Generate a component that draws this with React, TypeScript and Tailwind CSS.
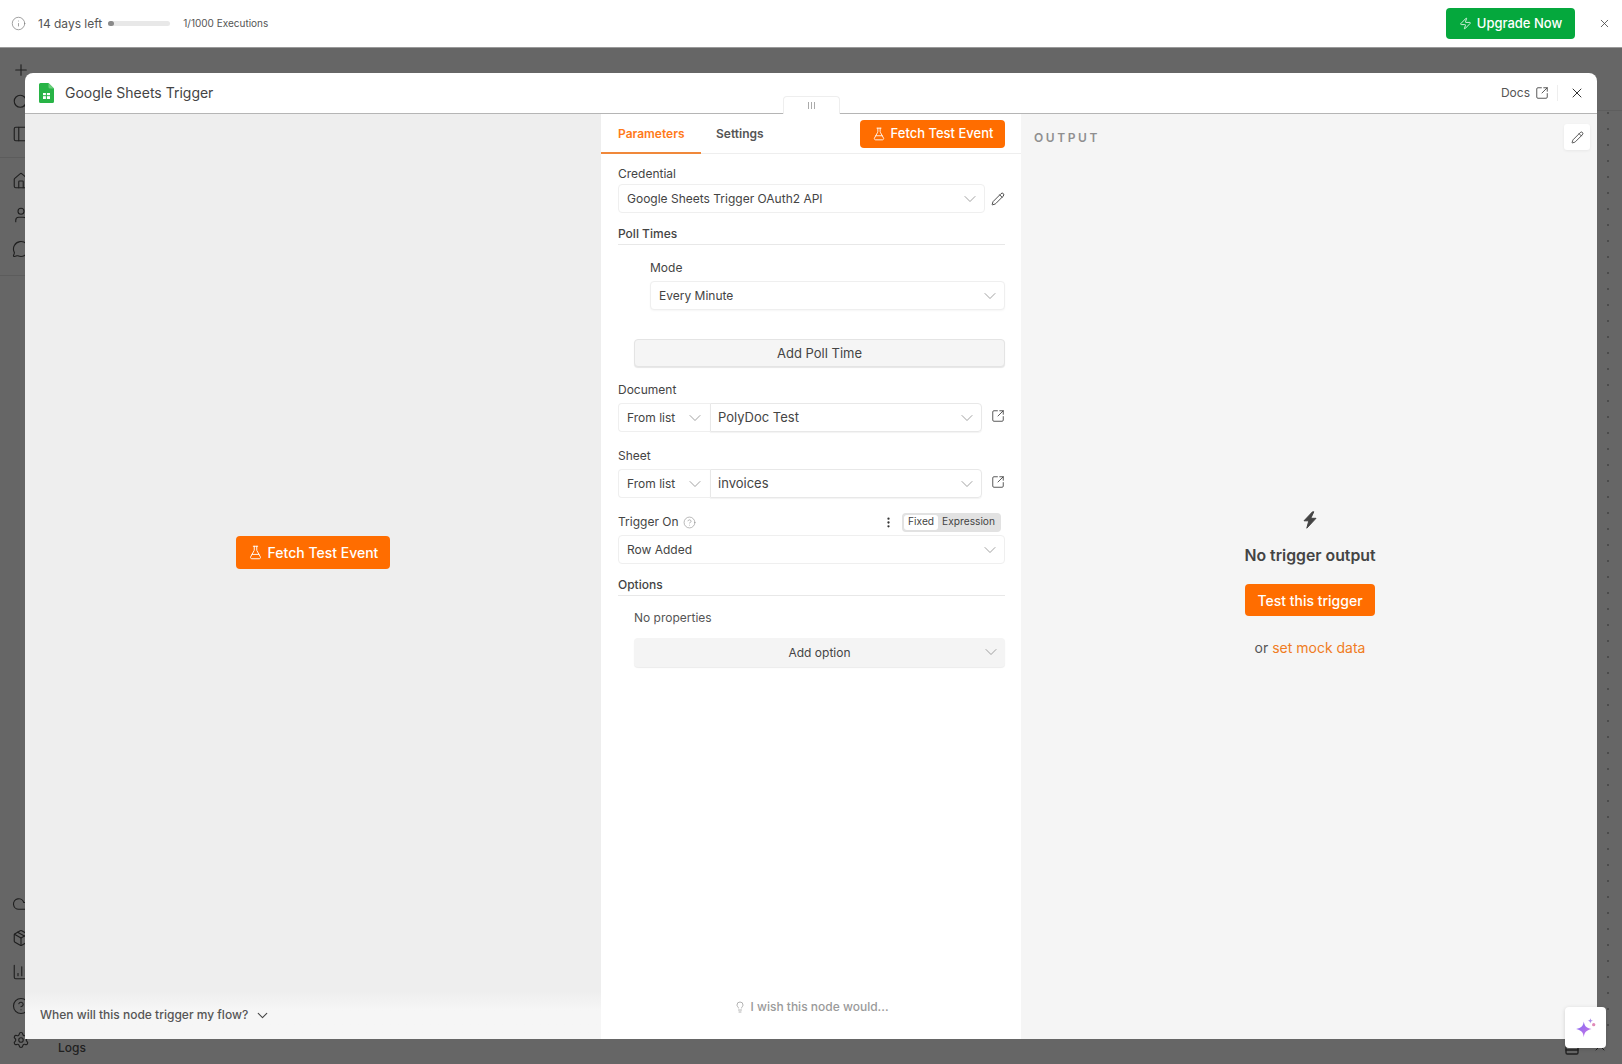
import {
  BarChart3,
  ChevronDown,
  ChevronUp,
  CircleHelp,
  Cloud,
  EllipsisVertical,
  FlaskConical,
  Home,
  Info,
  Lightbulb,
  MessageCircle,
  Package,
  PanelBottom,
  PanelLeft,
  Pencil,
  Plus,
  Search,
  Settings,
  SquareArrowOutUpRight,
  User,
  X,
  Zap,
} from "lucide-react";

const topIcons = [Plus, Search, PanelLeft];
const midIcons = [Home, User, MessageCircle];
const bottomIcons = [Cloud, Package, BarChart3, CircleHelp, Settings];

const Chevron = () => <ChevronDown className="w-[20px] h-[20px] text-[#8f8f8f] shrink-0" strokeWidth={1} />;

const Select = ({ value, className = "" }: { value: string; className?: string }) => (
  <div className={`flex items-center justify-between h-[29px] pl-[8px] pr-[4px] bg-white border border-[#efefef] rounded-[4px] text-[12px] text-[#444] ${className}`}>
    <span>{value}</span>
    <Chevron />
  </div>
);

const Label = ({ children }: { children: React.ReactNode }) => (
  <div className="h-[16px] pt-[1px] text-[12px] leading-[16px] text-[#444]">{children}</div>
);

const SectionTitle = ({ children }: { children: React.ReactNode }) => (
  <div className="text-[12px] leading-[16px] font-medium text-[#444] pt-[1px] pb-[2px] border-b border-[#e8e8e8]">{children}</div>
);

const FetchButton = ({ className = "", iconClass = "" }: { className?: string; iconClass?: string }) => (
  <button className={`flex items-center justify-center gap-[5px] bg-[#ff6d00] text-white rounded-[4px] font-medium ${className}`}>
    <FlaskConical className={iconClass} strokeWidth={1.5} />
    Fetch Test Event
  </button>
);

const ResourceRow = ({ value, nudge = false }: { value: string; nudge?: boolean }) => (
  <div className="flex items-center">
    <div className="flex items-center justify-between w-[92px] h-[29px] pl-[8px] pr-[5px] border border-[#efefef] border-r-0 rounded-l-[4px] text-[12px] text-[#444]">
      <span>From list</span>
      <Chevron />
    </div>
    <div className="flex items-center justify-between w-[272px] h-[29px] pl-[7px] pr-[4px] border border-[#e8e8e8] rounded-r-[4px] text-[13px] text-[#444] shadow-[0_1px_1px_rgba(0,0,0,0.05)]">
      <span className={nudge ? "pt-[1px]" : ""}>{value}</span>
      <Chevron />
    </div>
    <SquareArrowOutUpRight className="w-[14px] h-[14px] ml-[9px] mb-[3px] text-[#444]" strokeWidth={1.5} />
  </div>
);

const SheetsIcon = () => (
  <svg width="15" height="20" viewBox="0 0 15 20">
    <path d="M1.5 0H9.5L15 5.5V18.5A1.5 1.5 0 0 1 13.5 20H1.5A1.5 1.5 0 0 1 0 18.5V1.5A1.5 1.5 0 0 1 1.5 0Z" fill="#28b446" />
    <path d="M9.5 0L15 5.5H11A1.5 1.5 0 0 1 9.5 4Z" fill="#6ace7c" />
    <rect x="4" y="10" width="7" height="6" fill="#fff" />
    <path d="M4 12.7H11M7.4 10V16" stroke="#28b446" strokeWidth="1" />
  </svg>
);

const App = () => (
  <div className="relative w-[1622px] h-[1064px] overflow-hidden flex flex-col font-['Inter',sans-serif]">
    {/* trial banner */}
    <header className="h-[48px] shrink-0 bg-white flex items-center pl-[11px] pr-[11px] border-b border-[#9a9a9a]">
      <Info className="w-[15px] h-[15px] text-[#777]" strokeWidth={1.1} />
      <span className="ml-[12px] text-[12px] text-[#555]">14 days left</span>
      <div className="ml-[6px] w-[62px] h-[5px] rounded-full bg-[#e8e8e8]">
        <div className="w-[6px] h-[5px] rounded-full bg-[#8a8a8a]" />
      </div>
      <span className="ml-[13px] text-[10px] text-[#555]">1/1000 Executions</span>
      <button className="ml-auto flex items-center gap-[5px] h-[31px] w-[129px] justify-center rounded-[4px] bg-[#05a83d] text-white text-[13px] font-medium">
        <Zap className="w-[13px] h-[13px]" strokeWidth={1.5} />
        Upgrade Now
      </button>
      <X className="ml-[23px] w-[13px] h-[13px] text-[#444]" strokeWidth={1.5} />
    </header>

    {/* page behind the modal */}
    <div className="flex-1 min-h-0 flex bg-[#666]">
      <aside className="w-[42px] shrink-0 flex flex-col justify-between text-[#1f1f1f] pt-[13px] pb-[15px]">
        <div>
          <div className="flex flex-col items-center gap-[14px] pb-[14px] border-b border-[#5c5c5c]">
            {topIcons.map((I, i) => (
              <I key={i} className="w-[18px] h-[18px]" strokeWidth={1.5} />
            ))}
          </div>
          <div className="flex flex-col items-center gap-[16px] pt-[14px] pb-[17px] border-b border-[#5c5c5c]">
            {midIcons.map((I, i) => (
              <I key={i} className="w-[18px] h-[18px]" strokeWidth={1.5} />
            ))}
          </div>
        </div>
        <div className="flex flex-col items-center gap-[16px]">
          {bottomIcons.map((I, i) => (
            <I key={i} className="w-[18px] h-[18px]" strokeWidth={1.5} />
          ))}
        </div>
      </aside>
      <main className="flex-1 min-w-0 flex flex-col">
        <div className="h-[63px] shrink-0 border-b border-[#5e5e5e]" />
        <div className="flex-1 bg-[radial-gradient(#4c4c4c_1px,transparent_1.2px)] bg-[size:16px_16px] bg-[position:6px_-6px]" />
        <div className="h-[32px] shrink-0 bg-[#666] flex items-center pl-[16px] pr-[14px] text-[12px] font-medium text-[#1f1f1f]">
          Logs
          <PanelBottom className="ml-auto w-[16px] h-[16px]" strokeWidth={2} />
          <ChevronUp className="ml-[12px] w-[16px] h-[16px]" strokeWidth={1.5} />
        </div>
      </main>
    </div>

    {/* node details modal */}
    <section className="absolute left-[25px] top-[73px] w-[1572px] h-[966px] flex flex-col bg-white rounded-t-[8px]">
      <div className="h-[41px] shrink-0 flex items-center pl-[14px] pr-[12px] pb-[1px] border-b border-[#b5b5b5]">
        <SheetsIcon />
        <span className="ml-[11px] text-[14px] text-[#444]">Google Sheets Trigger</span>
        <span className="ml-auto text-[12px] text-[#555]">Docs</span>
        <SquareArrowOutUpRight className="ml-[5px] w-[14px] h-[14px] text-[#444]" strokeWidth={1.5} />
        <span className="ml-[8px] w-px h-[16px] bg-[#eee]" />
        <X className="ml-[11px] w-[16px] h-[16px] text-[#333]" strokeWidth={1.5} />
      </div>

      <div className="absolute left-[758px] top-[23px] w-[57px] h-[18px] bg-white border border-[#eee] border-b-0 rounded-t-[4px] flex items-center justify-center gap-[2px]">
        <span className="w-px h-[7px] bg-[#aaa]" />
        <span className="w-px h-[7px] bg-[#aaa]" />
        <span className="w-px h-[7px] bg-[#aaa]" />
      </div>

      <div className="flex-1 flex min-h-0">
        {/* input panel */}
        <div className="w-[576px] shrink-0 bg-[#eee] flex flex-col">
          <div className="flex-1 flex items-center justify-center">
            <FetchButton className="w-[154px] h-[33px] text-[14px]" iconClass="w-[15px] h-[15px]" />
          </div>
          <div className="h-[48px] bg-linear-to-b from-[#eee] to-[#f6f6f6] to-40% flex items-center pl-[15px] gap-[6px] text-[12px] font-medium text-[#555]">
            When will this node trigger my flow?
            <ChevronDown className="w-[17px] h-[17px] text-[#444]" strokeWidth={1.5} />
          </div>
        </div>

        {/* parameters panel */}
        <div className="w-[420px] shrink-0 bg-white flex flex-col">
          <div className="h-[40px] shrink-0 flex items-stretch pr-[16px] border-b border-[#eee]">
            <div className="w-[100px] pl-[17px] pt-[2px] flex items-center text-[12px] font-semibold text-[#ff7a1a] border-b-2 border-[#f0883a] h-[40px]">Parameters</div>
            <div className="pl-[15px] flex items-center text-[12px] font-semibold text-[#555]">Settings</div>
            <FetchButton className="ml-auto self-center w-[145px] h-[28px] text-[13px]" iconClass="w-[14px] h-[14px]" />
          </div>

          <div className="flex-1 pl-[17px] pr-[16px] pt-[11px] flex flex-col">
            <Label>Credential</Label>
            <div className="flex items-center mt-[3px]">
              <Select value="Google Sheets Trigger OAuth2 API" className="w-[367px]" />
              <Pencil className="ml-[6px] w-[14px] h-[14px] text-[#333]" strokeWidth={1.5} />
            </div>

            <div className="mt-[12px]">
              <SectionTitle>Poll Times</SectionTitle>
            </div>
            <div className="mt-[14px] pl-[32px]">
              <Label>Mode</Label>
              <Select value="Every Minute" className="mt-[6px] shadow-[0_1px_2px_rgba(0,0,0,0.04)]" />
            </div>
            <div className="mt-[29px] pl-[16px]">
              <button className="w-full h-[28px] pt-[1px] bg-[#f5f5f5] border border-[#e4e4e4] rounded-[4px] text-[13px] text-[#444] shadow-[0_1px_1px_rgba(0,0,0,0.1)]">Add Poll Time</button>
            </div>

            <div className="mt-[14px]">
              <Label>Document</Label>
            </div>
            <div className="mt-[6px]">
              <ResourceRow value="PolyDoc Test" />
            </div>
            <div className="mt-[15px]">
              <Label>Sheet</Label>
            </div>
            <div className="mt-[6px]">
              <ResourceRow value="invoices" nudge />
            </div>

            <div className="mt-[14px] h-[20px] flex items-center">
              <span className="text-[12px] text-[#444]">Trigger On</span>
              <CircleHelp className="ml-[4px] w-[13px] h-[13px] text-[#888]" strokeWidth={1.1} />
              <EllipsisVertical className="ml-auto w-[13px] h-[13px] text-[#333]" strokeWidth={2.25} />
              <div className="ml-[7px] mr-[4px] flex items-center h-[19px] p-[2px] bg-[#e2e2e2] rounded-[4px] text-[10.2px] text-[#444]">
                <span className="h-[15px] px-[4px] flex items-center bg-white rounded-[3px]">Fixed</span>
                <span className="px-[4px]">Expression</span>
              </div>
            </div>
            <Select value="Row Added" className="mt-[3px]" />

            <div className="mt-[12px]">
              <SectionTitle>Options</SectionTitle>
            </div>
            <div className="mt-[13px] pl-[16px] pt-[1px] h-[16px] text-[12px] leading-[16px] text-[#555]">No properties</div>
            <div className="mt-[13px] ml-[16px] relative h-[29px] bg-[#f4f4f4] rounded-[4px] flex items-center justify-center text-[12px] text-[#444] shadow-[0_1px_1px_rgba(0,0,0,0.08)]">
              Add option
              <div className="absolute right-[4px] top-[4px]">
                <Chevron />
              </div>
            </div>

            <div className="mt-auto pb-[23px] flex items-center justify-center gap-[4px] text-[12px] font-medium text-[#9a9a9a]">
              <Lightbulb className="w-[12px] h-[12px]" strokeWidth={1.5} />
              I wish this node would...
            </div>
          </div>
        </div>

        {/* output panel */}
        <div className="flex-1 relative bg-[#f5f5f5] flex flex-col items-center justify-center pt-[20px] pl-[2px]">
          <div className="absolute left-[13px] top-[15px] text-[12px] font-semibold tracking-[2.6px] text-[#8f8f8f]">OUTPUT</div>
          <div className="absolute right-[7px] top-[10px] w-[26px] h-[26px] bg-white rounded-[3px] flex items-center justify-center shadow-[0_1px_3px_rgba(0,0,0,0.06)]">
            <Pencil className="w-[13px] h-[13px] text-[#333]" strokeWidth={1.5} />
          </div>
          <svg width="14" height="18" viewBox="0 0 14 18" className="text-[#444] -mt-[4px]">
            <path d="M9.5 .8L1 9.8H5.8L3.8 17.2L13 7.3H7.8L10.8 .8Z" fill="currentColor" stroke="currentColor" strokeWidth="1" strokeLinejoin="round" />
          </svg>
          <div className="mt-[17px] text-[15.8px] leading-[20px] font-semibold text-[#444]">No trigger output</div>
          <button className="mt-[18px] w-[130px] h-[32px] bg-[#ff6d00] rounded-[4px] text-[14px] font-medium text-white">Test this trigger</button>
          <div className="mt-[22px] text-[14px] leading-[20px] text-[#555]">
            or <span className="text-[#f07c22]">set mock data</span>
          </div>
        </div>
      </div>
    </section>

    {/* assistant button */}
    <div className="absolute left-[1565px] top-[1007px] w-[41px] h-[41px] bg-white rounded-[4px] shadow-[0_1px_4px_rgba(0,0,0,0.15)] flex items-center justify-center">
      <svg width="22" height="22" viewBox="0 0 20 20">
        <defs>
          <linearGradient id="spark" x1="0" y1="0" x2="1" y2="1">
            <stop offset="0" stopColor="#7f6cf5" />
            <stop offset="1" stopColor="#cf74e4" />
          </linearGradient>
        </defs>
        <path d="M8 4C8.6 8 10 9.6 15 11C10 12.4 8.6 14 8 18.5C7.4 14 6 12.4 1 11C6 9.6 7.4 8 8 4Z" fill="url(#spark)" />
        <path d="M14 1C14.2 2.6 14.8 3.2 16.5 3.5C14.8 3.8 14.2 4.4 14 6C13.8 4.4 13.2 3.8 11.5 3.5C13.2 3.2 13.8 2.6 14 1Z" fill="#a98be8" />
        <circle cx="17" cy="7" r="1.5" fill="#e08ab8" />
      </svg>
    </div>
  </div>
);

export default App;
